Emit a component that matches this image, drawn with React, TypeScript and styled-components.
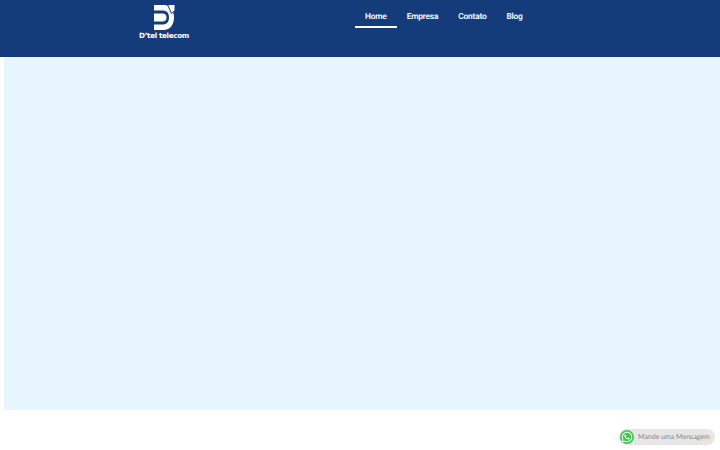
import * as React from 'react';
import { FaWhatsapp } from 'react-icons/fa';
import styled, { createGlobalStyle } from 'styled-components';

const GlobalStyle = createGlobalStyle`
	html,
	body {
		margin: 0;
		padding: 0;
		background: #ffffff;
		font-family: 'Roboto', 'Liberation Sans', sans-serif;
		text-rendering: geometricPrecision;
	}
`;

const Page = styled.div`
	width: 720px;
	height: 450px;
	overflow: hidden;
`;

const Header = styled.header`
	display: flex;
	align-items: flex-start;
	height: 57px;
	padding-left: 139px;
	box-sizing: border-box;
	background: #153c7a;
`;

const Logo = styled.a`
	display: flex;
	flex-direction: column;
	align-items: center;
	width: 50px;
	padding-top: 4px;
	color: #ffffff;
`;

const LogoName = styled.span`
	font-family: 'DejaVu Sans', 'Liberation Sans', sans-serif;
	font-size: 7.2px;
	font-weight: 700;
	line-height: 9px;
	letter-spacing: -0.35px;
	white-space: nowrap;
`;

const Nav = styled.nav`
	display: flex;
	margin-left: 166px;
`;

const NavItem = styled.a<{ $active?: boolean }>`
	display: block;
	height: 28px;
	padding: 11.500px 10px 0;
	box-sizing: border-box;
	border-bottom: 2px solid ${(p) => (p.$active ? '#ffffff' : 'transparent')};
	color: #ffffff;
	font-size: 8.4px;
	font-weight: 600;
	line-height: 11px;
	letter-spacing: -0.2px;
`;

const Hero = styled.main`
	height: 353px;
	margin-left: 4px;
	background: #e7f5ff;
`;

const Chat = styled.a`
	position: fixed;
	left: 619px;
	top: 429px;
	display: flex;
	align-items: center;
	width: 96px;
	height: 16px;
	border-radius: 8px;
	background: #e6e6e6;
	color: #888888;
	font-family: 'Lato', 'Liberation Sans', sans-serif;
	font-size: 7px;
	white-space: nowrap;
`;

const ChatIcon = styled.span`
	display: flex;
	align-items: center;
	justify-content: center;
	width: 14px;
	height: 14px;
	margin: 0 4px 0 1px;
	border-radius: 50%;
	background: #45c654;
	color: #ffffff;
	font-size: 12px;
`;

const App: React.FC = () => (
	<Page>
		<GlobalStyle />
		<Header>
			<Logo>
				<svg width="22" height="27" viewBox="0 0 22 27">
					<path
						fill="#ffffff"
						d="M1 1h10c6.500 0 10 5.500 10 12.500S17 26 10.500 26H1v-5.500h9c4 0 6-3 6-7s-2-7-6-7H1z"
					/>
					<path fill="#ffffff" d="M1 9.500h8.500c2.500 0 4 1.600 4 4s-1.500 4-4 4H1z" />
					<path
						fill="#ffffff"
						stroke="#153c7a"
						strokeWidth="1"
						d="M14.500 .5h7.500v6l-3.500 3z"
					/>
				</svg>
				<LogoName>D’tel telecom</LogoName>
			</Logo>
			<Nav>
				<NavItem $active>Home</NavItem>
				<NavItem>Empresa</NavItem>
				<NavItem>Contato</NavItem>
				<NavItem>Blog</NavItem>
			</Nav>
		</Header>
		<Hero />
		<Chat>
			<ChatIcon>
				<FaWhatsapp />
			</ChatIcon>
			Mande uma Mensagem
		</Chat>
	</Page>
);

export default App;
